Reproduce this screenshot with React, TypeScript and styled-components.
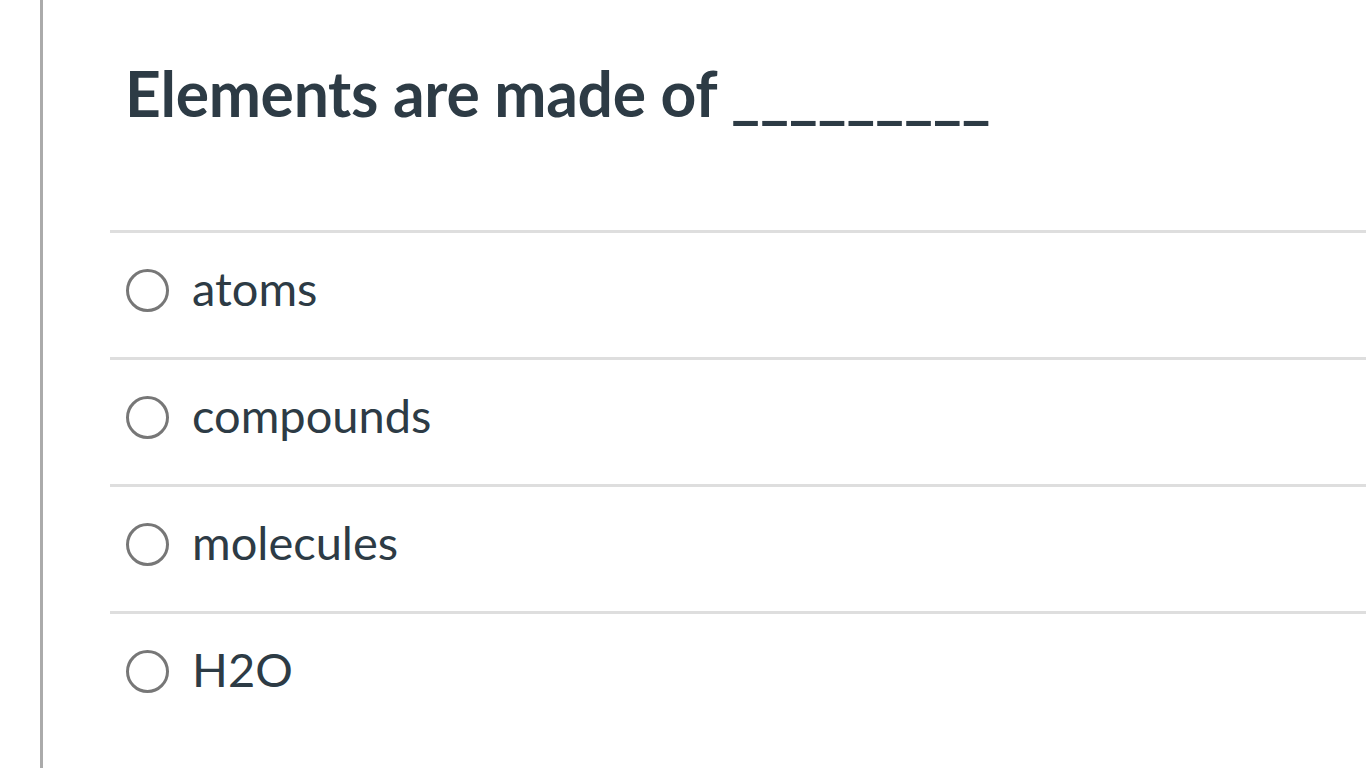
import styled, { createGlobalStyle } from 'styled-components';

const GlobalStyle = createGlobalStyle`
  html, body {
    margin: 0;
    padding: 0;
    background: #fff;
  }
  body {
    font-family: Lato, "Noto Sans", sans-serif;
    color: #2d3b45;
  }
`;

const Page = styled.div`
  height: 768px;
  overflow: hidden;
  padding-left: 40px;
  box-sizing: border-box;
`;

const Panel = styled.div`
  height: 100%;
  border-left: 3px solid #ababab;
  padding-left: 67px;
`;

const Question = styled.h1`
  margin: 0;
  padding: 62px 0 0 15px;
  height: 230px;
  box-sizing: border-box;
  font-size: 62.4px;
  font-weight: 700;
  line-height: 1;
  letter-spacing: -0.3px;
`;

const Answers = styled.div`
  display: flex;
  flex-direction: column;
`;

const Answer = styled.label`
  display: flex;
  align-items: center;
  gap: 23px;
  height: 127px;
  box-sizing: border-box;
  padding: 0 0 15px 16px;
  border-top: 3px solid #dedede;
  font-size: 47px;
  cursor: pointer;
`;

const Radio = styled.span`
  width: 37px;
  height: 37px;
  border: 3px solid #777;
  border-radius: 50%;
  flex: none;
  margin-top: 6px;
`;

const answers = ['atoms', 'compounds', 'molecules', 'H2O'];

export default function App() {
  return (
    <Page>
      <GlobalStyle />
      <Panel>
        <Question>Elements are made of _________</Question>
        <Answers>
          {answers.map((a) => (
            <Answer key={a}>
              <Radio />
              {a}
            </Answer>
          ))}
        </Answers>
      </Panel>
    </Page>
  );
}
